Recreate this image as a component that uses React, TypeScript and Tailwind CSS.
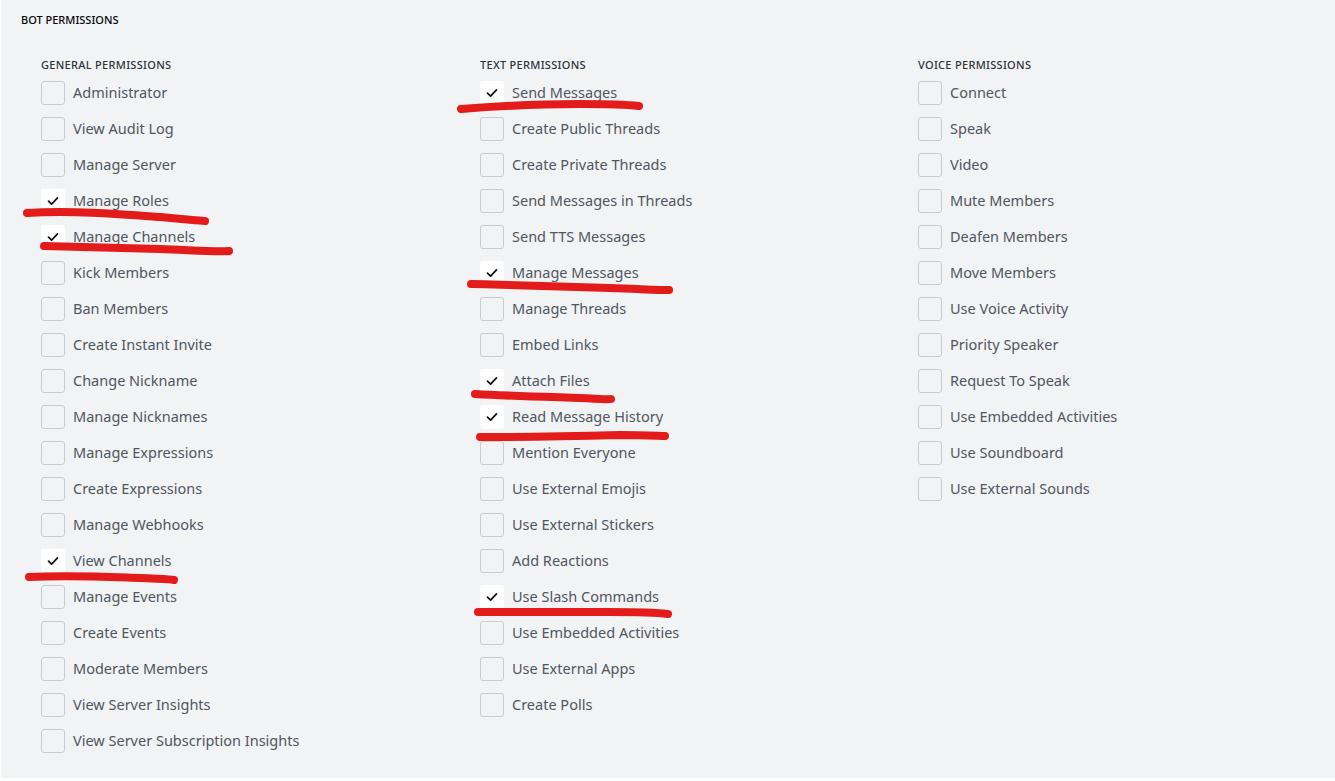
const general: [string, boolean][] = [
  ['Administrator', false],
  ['View Audit Log', false],
  ['Manage Server', false],
  ['Manage Roles', true],
  ['Manage Channels', true],
  ['Kick Members', false],
  ['Ban Members', false],
  ['Create Instant Invite', false],
  ['Change Nickname', false],
  ['Manage Nicknames', false],
  ['Manage Expressions', false],
  ['Create Expressions', false],
  ['Manage Webhooks', false],
  ['View Channels', true],
  ['Manage Events', false],
  ['Create Events', false],
  ['Moderate Members', false],
  ['View Server Insights', false],
  ['View Server Subscription Insights', false],
];

const text: [string, boolean][] = [
  ['Send Messages', true],
  ['Create Public Threads', false],
  ['Create Private Threads', false],
  ['Send Messages in Threads', false],
  ['Send TTS Messages', false],
  ['Manage Messages', true],
  ['Manage Threads', false],
  ['Embed Links', false],
  ['Attach Files', true],
  ['Read Message History', true],
  ['Mention Everyone', false],
  ['Use External Emojis', false],
  ['Use External Stickers', false],
  ['Add Reactions', false],
  ['Use Slash Commands', true],
  ['Use Embedded Activities', false],
  ['Use External Apps', false],
  ['Create Polls', false],
];

const voice: [string, boolean][] = [
  ['Connect', false],
  ['Speak', false],
  ['Video', false],
  ['Mute Members', false],
  ['Deafen Members', false],
  ['Move Members', false],
  ['Use Voice Activity', false],
  ['Priority Speaker', false],
  ['Request To Speak', false],
  ['Use Embedded Activities', false],
  ['Use Soundboard', false],
  ['Use External Sounds', false],
];

// freehand red marks drawn over the screenshot
const marks = [
  'M27 213 C70 210 120 214 160 217 C180 219 195 220 205 221',
  'M44 246 C80 247 120 248 160 249 C190 250 215 252 229 251',
  'M29 577 C70 575 110 577 140 578 C160 579 170 579 174 580',
  'M461 109 C500 106 540 104 580 104 C610 104 630 105 639 106',
  'M471 284 C520 285 570 287 610 288 C640 289 660 290 669 290',
  'M475 394 C510 396 550 397 580 398 C600 399 608 400 611 399',
  'M480 437 C530 437 580 436 620 435 C645 435 660 436 665 436',
  'M478 612 C520 612 570 612 610 612 C640 612 660 613 668 614',
];

function Checkbox({ checked }: { checked: boolean }) {
  if (checked) {
    return (
      <div className="w-6 h-6 rounded-[3px] bg-white flex items-center justify-center shrink-0">
        <svg width="12" height="10" viewBox="0 0 12 10" fill="none">
          <path d="M1.5 5.2 L4.6 8.2 L10.5 1.8" stroke="#111" strokeWidth="1.7" strokeLinecap="round" strokeLinejoin="round" />
        </svg>
      </div>
    );
  }
  return <div className="w-6 h-6 rounded-[3px] border border-[#c7ccd1] shrink-0" />;
}

function Column({ title, items }: { title: string; items: [string, boolean][] }) {
  return (
    <div className="flex flex-col">
      <div className="text-[11px] leading-4 font-medium tracking-[0.3px] text-[#2e3338] uppercase">{title}</div>
      <div className="mt-[2px] flex flex-col">
        {items.map(([label, on], i) => (
          <div key={i} className="h-9 flex items-center gap-2">
            <Checkbox checked={on} />
            <span className="text-[14.5px] text-[#4f5660]">{label}</span>
          </div>
        ))}
      </div>
    </div>
  );
}

export default function App() {
  return (
    <div className="w-full h-[781px] bg-white" style={{ fontFamily: '"Noto Sans", "Open Sans", sans-serif' }}>
      <div className="relative ml-[1px] h-[778px] bg-[#f2f3f5] pt-3 pl-5">
        <div className="text-[11px] leading-4 font-medium text-[#060607] uppercase">Bot Permissions</div>
        <div className="mt-[29px] pl-5 grid grid-cols-[439px_438px_1fr]">
          <Column title="General Permissions" items={general} />
          <Column title="Text Permissions" items={text} />
          <Column title="Voice Permissions" items={voice} />
        </div>
        <svg className="absolute inset-0 pointer-events-none" width="1334" height="778" style={{ left: -1 }}>
          {marks.map((d, i) => (
            <path key={i} d={d} stroke="#e31b1b" strokeWidth="8" strokeLinecap="round" fill="none" />
          ))}
        </svg>
      </div>
    </div>
  );
}
